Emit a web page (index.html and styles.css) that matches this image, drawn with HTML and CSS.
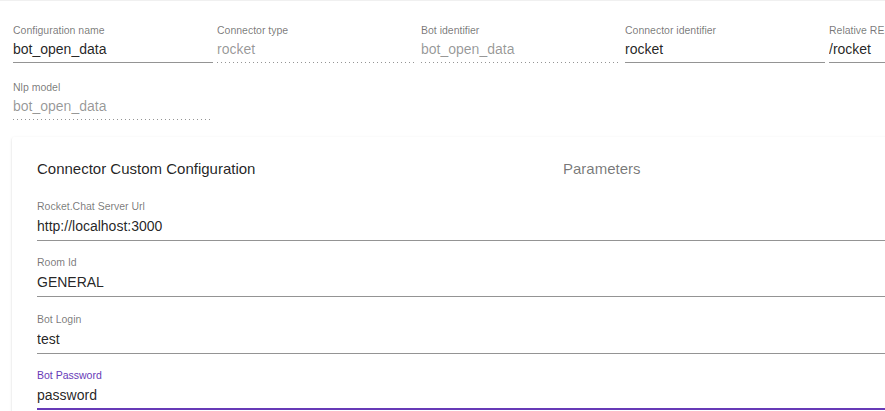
FILE: index.html
```html
<!DOCTYPE html>
<html>
<head>
<meta charset="utf-8">
<link rel="stylesheet" href="styles.css">
</head>
<body>
<div class="page">
  <div class="topline"></div>
  <div class="form">
    <div class="row">
      <div class="field"><div class="label">Configuration name</div><div class="value">bot_open_data</div></div>
      <div class="field disabled"><div class="label">Connector type</div><div class="value">rocket</div></div>
      <div class="field disabled"><div class="label">Bot identifier</div><div class="value">bot_open_data</div></div>
      <div class="field"><div class="label">Connector identifier</div><div class="value">rocket</div></div>
      <div class="field"><div class="label">Relative REST path</div><div class="value">/rocket</div></div>
    </div>
    <div class="row second">
      <div class="field disabled"><div class="label">Nlp model</div><div class="value">bot_open_data</div></div>
    </div>
  </div>
  <div class="card">
    <div class="card-head">
      <div class="card-title">Connector Custom Configuration</div>
      <div class="card-sub">Parameters</div>
    </div>
    <div class="field wide"><div class="label">Rocket.Chat Server Url</div><div class="value">http://localhost:3000</div></div>
    <div class="field wide"><div class="label">Room Id</div><div class="value">GENERAL</div></div>
    <div class="field wide"><div class="label">Bot Login</div><div class="value">test</div></div>
    <div class="field wide focused"><div class="label">Bot Password</div><div class="value">password</div></div>
  </div>
</div>
</body>
</html>
```

FILE: styles.css
```css
html, body {
  margin: 0;
  padding: 0;
  background: #fff;
  font-family: "Liberation Sans", Arial, Helvetica, sans-serif;
  overflow: hidden;
}
.page {
  width: 885px;
  height: 411px;
  overflow: hidden;
}
.topline {
  height: 1px;
  background: #f0f0f0;
}
.form {
  padding: 23px 0 0 13px;
}
.row {
  display: flex;
  gap: 4px;
  margin-bottom: 18px;
  white-space: nowrap;
}
.field {
  width: 200px;
  flex: none;
  display: flex;
  flex-direction: column;
  border-bottom: 1px solid #949494;
  overflow: hidden;
}
.label {
  font-size: 10.5px;
  line-height: 13px;
  color: rgba(0, 0, 0, 0.54);
  white-space: nowrap;
}
.value {
  font-size: 14px;
  line-height: 18px;
  margin-top: 3px;
  padding-bottom: 4px;
  color: rgba(0, 0, 0, 0.87);
  white-space: nowrap;
}
.field.disabled {
  border-bottom: none;
  padding-bottom: 1px;
  background: linear-gradient(to right, rgba(0, 0, 0, 0.42) 0, rgba(0, 0, 0, 0.42) 33%, transparent 33%) left bottom / 4px 1px repeat-x;
}
.field.disabled .value {
  color: rgba(0, 0, 0, 0.42);
}
.card {
  margin-left: 12px;
  margin-top: -1px;
  width: 1000px;
  background: #fff;
  box-shadow: 0 2px 1px -1px rgba(0,0,0,.2), 0 1px 1px 0 rgba(0,0,0,.14), 0 1px 3px 0 rgba(0,0,0,.12);
  padding: 23px 25px 20px 25px;
  border-radius: 2px;
}
.card-head {
  display: flex;
  margin-bottom: 21.5px;
}
.card-title {
  width: 526px;
  font-size: 15px;
  line-height: 18px;
  color: rgba(0, 0, 0, 0.87);
}
.card-sub {
  font-size: 15px;
  line-height: 18px;
  color: rgba(0, 0, 0, 0.54);
}
.field.wide {
  width: 100%;
  margin-bottom: 15.67px;
}
.field.wide .value {
  margin-top: 4px;
  padding-bottom: 5px;
}
.field.focused {
  border-bottom: 2px solid #673ab7;
}
.field.focused .value {
  padding-bottom: 4px;
}
.field.focused .label {
  color: #673ab7;
}
```
